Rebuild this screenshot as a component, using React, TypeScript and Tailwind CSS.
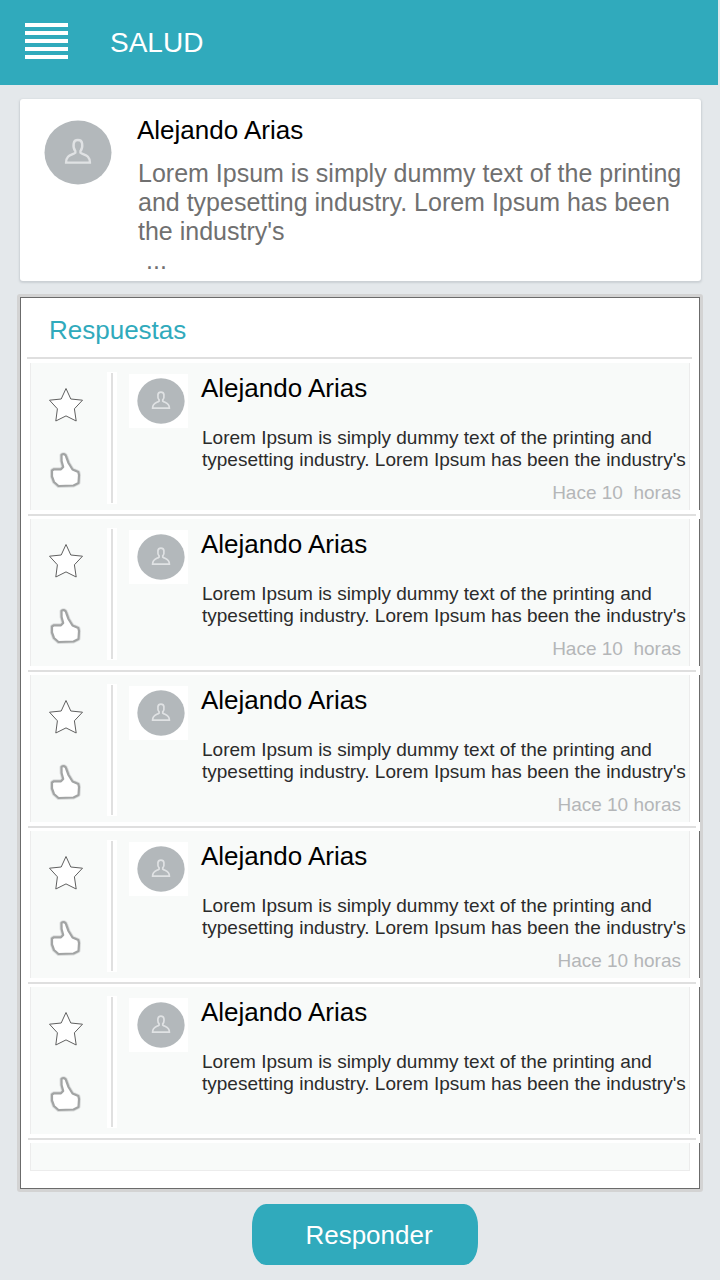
import React from "react";

type Reply = { id: number; author: string; lines: [string, string]; time?: string };

const lines: [string, string] = [
  "Lorem Ipsum is simply dummy text of the printing and",
  "typesetting industry. Lorem Ipsum has been the industry's",
];

const replies: Reply[] = [
  { id: 1, author: "Alejando Arias", lines, time: "Hace 10\u00a0 horas" },
  { id: 2, author: "Alejando Arias", lines, time: "Hace 10\u00a0 horas" },
  { id: 3, author: "Alejando Arias", lines, time: "Hace 10 horas" },
  { id: 4, author: "Alejando Arias", lines, time: "Hace 10 horas" },
  { id: 5, author: "Alejando Arias", lines },
];

function Avatar({ className }: { className: string }) {
  return (
    <svg viewBox="0 0 68 65" preserveAspectRatio="none" className={className} aria-hidden="true">
      <ellipse cx="34" cy="32.5" rx="33.5" ry="32" fill="#b3b8bb" />
      <path
        d="M31.300 31C28.900 28.500 29.500 25 29.700 23.500C30.300 18.900 37.500 18.900 38.100 23.500C38.300 25 38.900 28.500 36.500 31V32.600C39.500 35.200 45.900 34.500 45.900 42.600H22.100C22.100 34.500 28.300 35.200 31.300 32.600Z"
        fill="none"
        stroke="#e0e2e4"
        strokeWidth="2.4"
      />
    </svg>
  );
}

function StarIcon() {
  return (
    <svg viewBox="0 0 36 36" className="size-9" aria-hidden="true">
      <path
        d="M18 1.500L22.800 12L34.500 13.200L26.400 21.800L28.200 34L18 28.900L7.800 34L9.400 21.800L1.500 13.200L13.200 12Z"
        fill="#fff"
        stroke="#606060"
        strokeWidth="1"
      />
    </svg>
  );
}

const thumbPath =
  "M13.500 4C15.500 2.500 17.800 3.200 18.300 6L20.500 12L24.500 18.500L30.300 21L31 24L30.500 32L25.500 34.500L10.500 35L6 31L4 25.500L4 19.500L6 18.300L13 18.300L15.200 16L13.600 10Z";

function ThumbIcon() {
  return (
    <svg viewBox="0 0 36 40" className="h-10 w-9" aria-hidden="true">
      <path d={thumbPath} fill="none" stroke="#dcdede" strokeWidth="4" strokeLinejoin="round" />
      <path d={thumbPath} fill="#fff" stroke="#a2a4a4" strokeWidth="2.2" strokeLinejoin="round" />
    </svg>
  );
}

function ReplyRow({ reply }: { reply: Reply }) {
  return (
    <li>
      <article className="mx-[9px] flex h-[147px] border-x border-[#ececec] bg-[#f8faf9]">
        <div className="flex w-[76px] shrink-0 flex-col items-center gap-7 pr-1.5 pt-6">
          <button type="button" aria-label="Favorito">
            <StarIcon />
          </button>
          <button type="button" aria-label="Me gusta">
            <ThumbIcon />
          </button>
        </div>
        <div className="mt-[9px] flex h-[132px] w-[10px] shrink-0 justify-center bg-white">
          <div className="my-px w-0.5 bg-[#e0e0e0]" />
        </div>
        <div className="ml-3 mt-[11px] flex h-[54px] w-[59px] shrink-0 items-start justify-center bg-white pl-1 pt-1">
          <Avatar className="h-[46px] w-12" />
        </div>
        <div className="ml-[13px] flex min-w-0 flex-1 flex-col pt-[9px]">
          <h3 className="text-[26px] leading-8 text-black">{reply.author}</h3>
          <p className="ml-px mt-[23px] whitespace-nowrap text-[19px] leading-[22px] text-[#2b2b2b]">
            {reply.lines[0]}
            <br />
            {reply.lines[1]}
          </p>
          {reply.time && (
            <time className="mr-2 mt-2.5 self-end text-[19px] leading-6 text-[#b4b6b8]">{reply.time}</time>
          )}
        </div>
      </article>
      <div className="relative -mr-px ml-[7px] h-[9px] bg-white pr-1 pt-1">
        <div className="h-0.5 bg-[#dfdfdf]" />
      </div>
    </li>
  );
}

export default function App() {
  return (
    <div className="min-h-screen bg-[#e4e8eb] font-['Liberation_Sans',Arial,sans-serif]">
      <header className="mr-0.5 flex h-[85px] items-center bg-[#30aabc] pl-[25px]">
        <button type="button" aria-label="Menú" className="mb-1 flex w-[43px] flex-col gap-1">
          <span className="h-1 bg-white" />
          <span className="h-1 bg-white" />
          <span className="h-1 bg-white" />
          <span className="h-1 bg-white" />
          <span className="h-1 bg-white" />
        </button>
        <h1 className="ml-[42px] text-[28px] leading-8 text-white">SALUD</h1>
      </header>

      <main className="pb-[15px]">
        <article className="ml-5 mr-[19px] mt-3.5 flex min-h-[182px] rounded-[3px] bg-white pl-6 pr-2 pt-[21px] shadow-[0_1px_2px_1px_#cbd0d4]">
          <Avatar className="h-[65px] w-[68px] shrink-0" />
          <div className="ml-[25px] -mt-1.5 min-w-0">
            <h2 className="text-[26px] leading-8 text-black">Alejando Arias</h2>
            <div className="ml-px mt-[13px] whitespace-nowrap text-[25px] leading-[29px] text-[#707070]">
              <p>
                Lorem Ipsum is simply dummy text of the printing
                <br />
                and typesetting industry. Lorem Ipsum has been
                <br />
                the industry's
              </p>
              <p className="pl-2">...</p>
            </div>
          </div>
        </article>

        <section className="mx-[17px] mt-[13px] rounded-[3px] bg-[#d3d3d3] p-[3px]">
          <div className="border border-[#6b6b6b] bg-white pb-[17px]">
            <h2 className="pb-[11px] pl-7 pt-4 text-[26px] leading-8 text-[#30aabc]">Respuestas</h2>
            <div className="ml-1.5 mr-[7px] h-0.5 bg-[#dfdfdf]" />
            <ul className="pt-1">
              {replies.map((reply) => (
                <ReplyRow key={reply.id} reply={reply} />
              ))}
            </ul>
            <div className="mx-[9px] h-7 border-x border-b border-[#ececec] bg-[#f8faf9]" />
          </div>
        </section>

        <div className="mt-3 flex justify-center pl-2.5">
          <button
            type="button"
            className="h-[61px] w-[226px] rounded-[14px/22px] bg-[#30aabc] pl-2 text-[26px] leading-8 text-white"
          >
            Responder
          </button>
        </div>
      </main>
    </div>
  );
}
